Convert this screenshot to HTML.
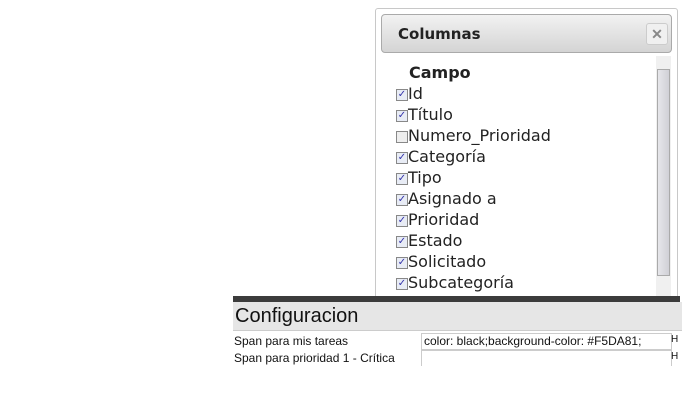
<!DOCTYPE html>
<html><head><style>
body{margin:0;width:700px;height:400px;background:#fff;position:relative;overflow:hidden;font-family:"Liberation Sans",sans-serif}
.dlg{position:absolute;left:375px;top:8px;width:301px;height:300px;border:1px solid #c8c8c8;border-radius:3px;background:#fff}
.hd{position:absolute;left:5px;top:5px;width:289px;height:37px;border:1px solid #aaa;border-radius:4px;background:linear-gradient(#f2f2f2,#d4d4d4)}
.hd b{position:absolute;left:16px;top:10px;font:bold 15px "DejaVu Sans",sans-serif;color:#222}
.x{position:absolute;right:3px;top:8px;width:20px;height:20px;background:#f0f0f0;border:1px solid #ccc;border-radius:3px;color:#888;font:bold 14px sans-serif;text-align:center;line-height:20px}
.sb{position:absolute;left:280px;top:47px;width:15px;height:241px;background:#f0f0f0}
.th{position:absolute;left:281px;top:60px;width:13px;height:207px;background:linear-gradient(90deg,#e6e6ea,#d0d0d6);border:1px solid #aaa;box-sizing:border-box}
.list{position:absolute;left:20px;top:53px;font:16px "DejaVu Sans",sans-serif;color:#222}
.list div{height:21px;line-height:21px;white-space:nowrap}
.cb{display:inline-block;width:10px;height:10px;border:1px solid #888;background:#e8ecf5;vertical-align:middle;margin-top:0;font-size:10px;line-height:10px;color:#33a;text-align:center}
.bar{position:absolute;left:233px;top:296px;width:447px;height:6px;background:#3c3c3c}
.cfg{position:absolute;left:233px;top:302px;width:447px;height:28px;background:#e6e6e6;border-bottom:1px solid #ccc;font-size:20px;line-height:29px;padding-left:2px;color:#111}
.r{position:absolute;left:234px;font-size:12px;color:#111}
.in{position:absolute;left:421px;width:247px;height:15px;border:1px solid #ccc;font-size:12px;line-height:15px;padding-left:2px;color:#111}
</style></head><body>
<div class="dlg">
<div class="hd"><b>Columnas</b><div class="x">✕</div></div>
<div class="sb"></div><div class="th"></div>
<div class="list">
<div style="font-weight:bold;padding-left:13px">Campo</div>
<div><span class="cb">✓</span>Id</div>
<div><span class="cb">✓</span>Título</div>
<div><span class="cb" style="background:#eee"></span>Numero_Prioridad</div>
<div><span class="cb">✓</span>Categoría</div>
<div><span class="cb">✓</span>Tipo</div>
<div><span class="cb">✓</span>Asignado a</div>
<div><span class="cb">✓</span>Prioridad</div>
<div><span class="cb">✓</span>Estado</div>
<div><span class="cb">✓</span>Solicitado</div>
<div><span class="cb">✓</span>Subcategoría</div>
</div>
</div>
<div class="bar"></div>
<div class="cfg">Configuracion</div>
<div class="r" style="top:334px">Span para mis tareas</div>
<div class="in" style="top:333px">color: black;background-color: #F5DA81;</div>
<div class="r" style="top:351px">Span para prioridad 1 - Crítica</div>
<div class="in" style="top:350px;border-bottom:none"></div>
<div class="r" style="left:671px;top:334px;font-size:10px">H</div>
<div class="r" style="left:671px;top:351px;font-size:10px">H</div>
</body></html>
